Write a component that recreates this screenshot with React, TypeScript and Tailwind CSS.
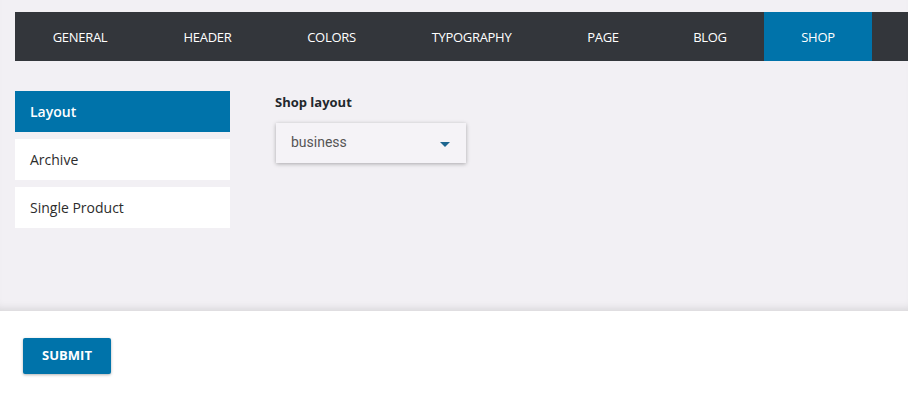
import React from "react";

const tabs: { t: string; w: string }[] = [
  { t: "GENERAL", w: "w-[130px]" },
  { t: "HEADER", w: "w-[125px]" },
  { t: "COLORS", w: "w-[123px]" },
  { t: "TYPOGRAPHY", w: "w-[157px]" },
  { t: "PAGE", w: "w-[106px]" },
  { t: "BLOG", w: "w-[108px]" },
  { t: "SHOP", w: "w-[108px]" },
];
const side = ["Layout", "Archive", "Single Product"];

export default function App() {
  return (
    <div className="w-[908px] h-[400px] flex flex-col bg-white" style={{ fontFamily: '"Open Sans", "Noto Sans", sans-serif' }}>
      <div className="h-[311px] bg-[#f2f0f4] flex flex-col pt-[12px] pl-[15px] shadow-[inset_0_-8px_8px_-6px_rgba(0,0,0,0.12)]">
        <nav className="h-[49px] bg-[#33363b] flex">
          {tabs.map(({ t, w }) => (
            <div
              key={t}
              className={`${w} flex items-center justify-center pt-[2px] text-[13px] tracking-[-0.3px] ${t === "SHOP" ? "bg-[#0073aa] text-white" : "text-white"}`}
            >
              {t}
            </div>
          ))}
        </nav>
        <div className="flex mt-[30px]">
          <div className="w-[215px] flex flex-col gap-[7px]">
            {side.map((s, i) => (
              <div
                key={s}
                className={`h-[41px] flex items-center pl-[15px] text-[14px] ${i === 0 ? "bg-[#0073aa] text-white font-semibold" : "bg-white text-[#2c2c2c] font-medium"}`}
              >
                {s}
              </div>
            ))}
          </div>
          <div className="ml-[45px] pt-[2px]">
            <div className="text-[13px] font-bold text-[#23282d]">Shop layout</div>
            <div className="mt-[10px] ml-[1px] w-[190px] h-[40px] bg-[#f5f3f7] shadow-[0_1px_4px_rgba(0,0,0,0.3)] flex items-center justify-between pl-[15px] pr-[16px]">
              <span className="text-[14px] text-[#555]" style={{ fontFamily: 'Roboto, "Noto Sans", sans-serif' }}>business</span>
              <svg width="10" height="5" viewBox="0 0 10 5" className="mt-[3px]">
                <path d="M0 0 L10 0 L5 5 Z" fill="#1d6690" />
              </svg>
            </div>
          </div>
        </div>
      </div>
      <div className="pl-[23px] pt-[27px]">
        <button className="w-[88px] h-[36px] bg-[#0073aa] text-white font-bold text-[13px] rounded-[2px] shadow-[0_1px_3px_rgba(0,0,0,0.3)]">
          SUBMIT
        </button>
      </div>
    </div>
  );
}
